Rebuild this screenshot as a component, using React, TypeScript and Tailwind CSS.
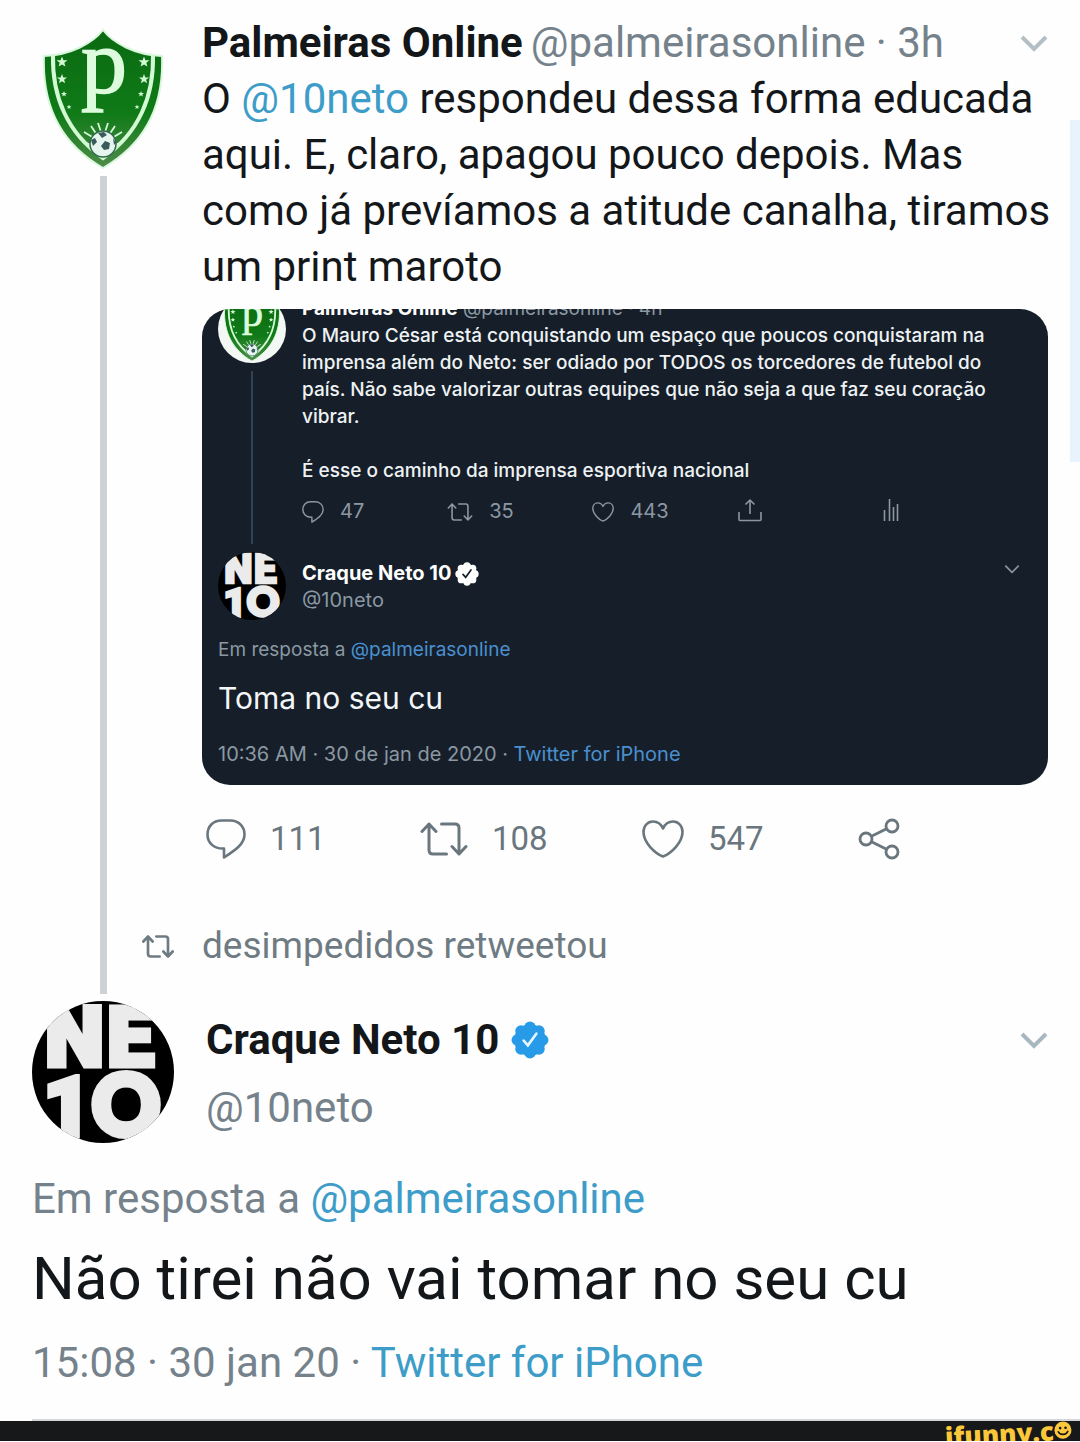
import type { ReactNode } from 'react';

type IconProps = { className?: string };

function ReplyIcon({ className }: IconProps) {
  return (
    <svg viewBox="0 0 40 40" fill="none" stroke="currentColor" strokeWidth="2.6" strokeLinejoin="round" className={className}>
      <path d="M15.5 1.5h9C33 1.5 38.5 8 38.5 15.500c0 9.500-9 15.500-20.500 23V29.500C8 30 1.500 24 1.500 15.500 1.500 7.500 7 1.500 15.500 1.500z" />
    </svg>
  );
}

function RetweetIcon({ className }: IconProps) {
  return (
    <svg viewBox="0 0 48 34" fill="none" stroke="currentColor" strokeLinecap="round" strokeLinejoin="round" className={className}>
      <path d="M2 9.500 9 2l7 7.500M9 2v26c0 2.500 1.500 4 4 4h13.500" />
      <path d="M46 24.500 39 32l-7-7.500M39 32V6c0-2.500-1.500-4-4-4H21.500" />
    </svg>
  );
}

function HeartIcon({ className }: IconProps) {
  return (
    <svg viewBox="0 0 42 38" fill="none" stroke="currentColor" strokeWidth="2.600" strokeLinejoin="round" className={className}>
      <path d="M21 36.500C13 33.500 1.500 22.500 1.500 12c0-6 4-10.500 9.500-10.500 4.500 0 8 2.500 10 7 2-4.500 5.500-7 10-7 5.500 0 9.500 4.500 9.500 10.500 0 10.500-11.500 21.500-19.500 24.500z" />
    </svg>
  );
}

function ShareIcon({ className }: IconProps) {
  return (
    <svg viewBox="0 0 42 42" fill="none" stroke="currentColor" strokeWidth="2.800" className={className}>
      <circle cx="8" cy="21" r="6" />
      <circle cx="34" cy="8" r="6" />
      <circle cx="34" cy="34" r="6" />
      <path d="M13.500 18.200 28.600 10.700M13.500 23.800l15.100 7.500" />
    </svg>
  );
}

function UploadIcon({ className }: IconProps) {
  return (
    <svg viewBox="0 0 24 24" fill="none" stroke="currentColor" strokeWidth="1.600" strokeLinejoin="round" className={className}>
      <path d="M1 14v7.500c0 .8.4 1 1 1h20c.6 0 1-.2 1-1V14M12 16V2M7.500 6.500 12 2l4.500 4.500" />
    </svg>
  );
}

function StatsIcon({ className }: IconProps) {
  return (
    <svg viewBox="0 0 16 24" fill="none" stroke="currentColor" strokeWidth="1.600" className={className}>
      <path d="M1.500 23V12M6.500 23V1M10.500 23V9M14.500 23V6" />
    </svg>
  );
}

function ChevronIcon({ className }: IconProps) {
  return (
    <svg viewBox="0 0 28 18" fill="none" stroke="currentColor" className={className}>
      <path d="M2 3l12 12L26 3" />
    </svg>
  );
}

function VerifiedIcon({ className, tick }: IconProps & { tick: string }) {
  return (
    <svg viewBox="0 0 36 36" className={className}>
      <g fill="currentColor">
        <circle cx="18" cy="18" r="15" />
        <circle cx="18" cy="6" r="5.500" />
        <circle cx="26.500" cy="9.500" r="5.500" />
        <circle cx="30" cy="18" r="5.500" />
        <circle cx="26.500" cy="26.500" r="5.500" />
        <circle cx="18" cy="30" r="5.500" />
        <circle cx="9.500" cy="26.500" r="5.500" />
        <circle cx="6" cy="18" r="5.500" />
        <circle cx="9.500" cy="9.500" r="5.500" />
      </g>
      <path d="M12 18.500l4 4.500 8-11" fill="none" stroke={tick} strokeWidth="2.500" strokeLinecap="round" />
    </svg>
  );
}

const STAR = 'M0-5 1.300-1.600 5-1.500 2.100.7 3.100 4.200 0 2.200-3.100 4.200-2.100.7-5-1.500-1.300-1.600z';

function ShieldLogo({ className }: IconProps) {
  return (
    <svg viewBox="0 0 122 142" className={className} role="img" aria-label="Palmeiras">
      <defs>
        <linearGradient id="shield" x1="0" y1="0" x2="0" y2="1">
          <stop offset="0" stopColor="#0b6a12" />
          <stop offset="0.600" stopColor="#0f7a17" />
          <stop offset="1" stopColor="#4f8c4a" />
        </linearGradient>
      </defs>
      <path
        d="M61 2c10 13 32 25 59 26 2 50-17 88-59 112C19 116 0 78 2 28 29 27 51 15 61 2z"
        fill="url(#shield)"
        stroke="#d9f7dc"
        strokeWidth="2"
      />
      <path d="M11 27C10 68 25 105 61 130c36-25 51-62 50-103" fill="none" stroke="#d2fbd4" strokeWidth="4" />
      <g fill="#d2fbd4">
        <path d={STAR} transform="translate(20 34) scale(1.100)" />
        <path d={STAR} transform="translate(20 51)" />
        <path d={STAR} transform="translate(22 66) scale(.6)" />
        <path d={STAR} transform="translate(27 79) scale(.5)" />
        <path d={STAR} transform="translate(102 34) scale(1.100)" />
        <path d={STAR} transform="translate(102 51)" />
        <path d={STAR} transform="translate(99 66) scale(.6)" />
        <path d={STAR} transform="translate(95 79) scale(.5)" />
      </g>
      <text x="39" y="65" fontFamily="Liberation Serif, serif" fontSize="92" fill="#dcfbdc" stroke="#dcfbdc" strokeWidth="1.500">
        p
      </text>
      <path
        d="M40 113l9 4M42 104l10 6M49 98l6 9M56 95l3 9M66 95l-3 9M73 98l-6 9M80 104l-10 6M82 113l-9 4"
        stroke="#d2fbd4"
        strokeWidth="1.800"
      />
      <circle cx="61" cy="116" r="13" fill="#e6f5ee" stroke="#2f6a4a" strokeWidth="1.500" />
      <path d="M63 113l5 2-1 6-5 1-3-4zM56 105l6-1 3 3-5 3zM49 112l4-2 2 4-4 4zM71 110l3 5-2 2z" fill="#3a5a5c" />
    </svg>
  );
}

function NetoLogo({ className, id }: IconProps & { id: string }) {
  return (
    <svg viewBox="0 0 142 142" className={className} role="img" aria-label="Craque Neto 10">
      <clipPath id={id}>
        <circle cx="71" cy="71" r="71" />
      </clipPath>
      <g clipPath={`url(#${id})`} fill="#ebebeb" stroke="#ebebeb" fontWeight="900">
        <rect width="142" height="142" fill="#000" stroke="none" />
        <g fontFamily="Roboto, sans-serif" fontSize="84" strokeWidth="5">
          <text x="13" y="65">N</text>
          <text x="75" y="65">E</text>
          <text x="11" y="135">1</text>
        </g>
        <text x="60" y="134" fontFamily="Lato, sans-serif" fontSize="84" strokeWidth="7">O</text>
      </g>
    </svg>
  );
}

function Action({ label, count, children, small }: { label: string; count?: string; children: ReactNode; small?: boolean }) {
  return (
    <button type="button" aria-label={label} className={small ? 'flex items-center gap-4' : 'flex items-center gap-6'}>
      {children}
      {count && <span>{count}</span>}
    </button>
  );
}

function EmbeddedPrint() {
  return (
    <div className="mt-[14px] overflow-hidden rounded-[28px] bg-[#161f29] px-4 pb-[17px] font-[Inter,sans-serif] text-[20px] leading-[27px] text-[#8b98a3]">
      <div className="-mt-[14px] flex gap-4">
        <div className="flex w-[68px] shrink-0 flex-col items-center">
          <div className="flex size-[68px] items-center justify-center rounded-full bg-[#f4f8f4]">
            <ShieldLogo className="h-[66px] w-[58px]" />
          </div>
          <div className="mt-2 mb-2 w-[2px] flex-1 bg-[#2f4353]" />
        </div>
        <div className="min-w-0 flex-1">
          <div className="text-[19px]">
            <span className="font-bold text-white">Palmeiras Online</span> @palmeirasonline · 4h
          </div>
          <p className="text-[19px] font-medium whitespace-nowrap text-[#eef2f4]">
            O Mauro César está conquistando um espaço que poucos conquistaram na
            <br />
            imprensa além do Neto: ser odiado por TODOS os torcedores de futebol do
            <br />
            país. Não sabe valorizar outras equipes que não seja a que faz seu coração
            <br />
            vibrar.
            <br />
            <br />É esse o caminho da imprensa esportiva nacional
          </p>
          <div className="mt-[14px] mr-1 grid h-[54px] grid-cols-5 items-start">
            <Action small label="Responder" count="47">
              <ReplyIcon className="size-[22px]" />
            </Action>
            <Action small label="Retweetar" count="35">
              <RetweetIcon className="h-[18px] w-[26px] stroke-3" />
            </Action>
            <Action small label="Curtir" count="443">
              <HeartIcon className="h-5 w-[22px]" />
            </Action>
            <Action small label="Compartilhar">
              <UploadIcon className="size-6" />
            </Action>
            <Action small label="Estatísticas">
              <StatsIcon className="h-6 w-4" />
            </Action>
          </div>
        </div>
      </div>

      <div className="flex gap-4">
        <NetoLogo id="neto-small" className="size-[68px] shrink-0" />
        <div className="min-w-0 flex-1 pt-2">
          <div className="flex items-center gap-1 font-bold text-white">
            Craque Neto 10 <VerifiedIcon className="size-6" tick="#161f29" />
          </div>
          <div>@10neto</div>
        </div>
        <button type="button" aria-label="Mais opções" className="mt-3 mr-3 self-start">
          <ChevronIcon className="h-[10px] w-4 stroke-3" />
        </button>
      </div>
      <p className="mt-4 text-[19px]">
        Em resposta a <a href="#palmeirasonline" className="text-[#4a8fd0]">@palmeirasonline</a>
      </p>
      <p className="mt-4 text-[30px] leading-[38px] text-[#f3f6f8]">Toma no seu cu</p>
      <p className="mt-6">
        10:36 AM · 30 de jan de 2020 · <a href="#source" className="text-[#4a8fd0]">Twitter for iPhone</a>
      </p>
    </div>
  );
}

export default function App() {
  return (
    <main className="relative bg-[#fefefe] font-[Roboto,sans-serif] text-[#14171a]">
      {/* Scroll indicator on the right edge */}
      <div className="absolute top-[120px] right-0 h-[342px] w-[10px] bg-[#e8f4fd]" />

      <article className="flex gap-7 px-8 pt-[15px]">
        <div className="flex w-[142px] shrink-0 flex-col items-center pt-[13px]">
          <ShieldLogo className="h-[142px] w-[122px]" />
          <div className="mt-[6px] w-[7px] flex-1 bg-[#cdd2d5]" />
        </div>

        <div className="min-w-0 flex-1">
          <header className="flex items-center gap-2 text-[42px] leading-[56px] whitespace-nowrap">
            <span className="font-bold">Palmeiras Online</span>
            <span className="text-[#75828b]">@palmeirasonline · 3h</span>
            <button type="button" aria-label="Mais opções" className="ml-auto text-[#b3bfc5]">
              <ChevronIcon className="h-[18px] w-7 stroke-4" />
            </button>
          </header>
          <p className="text-[42px] leading-[56px] whitespace-nowrap">
            O <a href="#10neto" className="text-[#3d9dc8]">@10neto</a> respondeu dessa forma educada
            <br />
            aqui. E, claro, apagou pouco depois. Mas
            <br />
            como já prevíamos a atitude canalha, tiramos
            <br />
            um print maroto
          </p>

          <EmbeddedPrint />

          <div className="mt-8 flex h-11 items-center justify-between pr-[148px] pl-1 text-[33px] text-[#6a767e]">
            <Action label="Responder" count="111">
              <ReplyIcon className="size-[40px]" />
            </Action>
            <Action label="Retweetar" count="108">
              <RetweetIcon className="h-[34px] w-12 stroke-3" />
            </Action>
            <Action label="Curtir" count="547">
              <HeartIcon className="h-[38px] w-[42px]" />
            </Action>
            <Action label="Compartilhar">
              <ShareIcon className="size-[42px]" />
            </Action>
          </div>

          <div className="mt-[57px] -ml-[60px] flex items-center gap-7 pb-5 text-[37px] leading-[56px] text-[#6f7b83]">
            <RetweetIcon className="h-[23px] w-8 stroke-4" />
            <span>desimpedidos retweetou</span>
          </div>
        </div>
      </article>

      <article className="px-8">
        <div className="flex gap-8 pt-[7px]">
          <NetoLogo id="neto-large" className="size-[142px] shrink-0" />
          <div className="min-w-0 flex-1 pt-[5px]">
            <div className="flex items-center gap-3 text-[42px] leading-[68px]">
              <span className="font-bold">Craque Neto 10</span>
              <VerifiedIcon className="size-[38px] text-[#279be8]" tick="#e6f6ff" />
              <button type="button" aria-label="Mais opções" className="ml-auto text-[#a9b8c0]">
                <ChevronIcon className="h-[18px] w-7 stroke-4" />
              </button>
            </div>
            <div className="text-[42px] leading-[68px] text-[#75828b]">@10neto</div>
          </div>
        </div>
        <p className="mt-7 text-[42px] leading-[56px] text-[#75828b]">
          Em resposta a <a href="#palmeirasonline" className="text-[#3d9dc8]">@palmeirasonline</a>
        </p>
        <p className="mt-3 text-[60px] leading-[80px]">Não tirei não vai tomar no seu cu</p>
        <p className="mt-4 pb-7 text-[42px] leading-[56px] text-[#75828b]">
          15:08 · 30 jan 20 · <a href="#source" className="text-[#3d9dc8]">Twitter for iPhone</a>
        </p>
      </article>

      <footer>
        <div className="ml-8 border-t-2 border-[#d5d8da]" />
        <div className="flex h-5 items-start justify-end overflow-hidden bg-[#17181a] pr-2">
          <div className="flex -rotate-3 items-center font-[Open_Sans,sans-serif] text-[26px] leading-[24px] font-extrabold text-[#fbc83b]">
            ifunny.c
            <svg viewBox="0 0 20 20" className="size-[18px]">
              <circle cx="10" cy="10" r="9.500" fill="currentColor" />
              <circle cx="7" cy="7.500" r="1.500" fill="#17181a" />
              <circle cx="13" cy="7.500" r="1.500" fill="#17181a" />
              <path d="M4.500 11c1.500 5 9.500 5 11 0" fill="none" stroke="#17181a" strokeWidth="1.800" />
            </svg>
          </div>
        </div>
      </footer>
    </main>
  );
}
